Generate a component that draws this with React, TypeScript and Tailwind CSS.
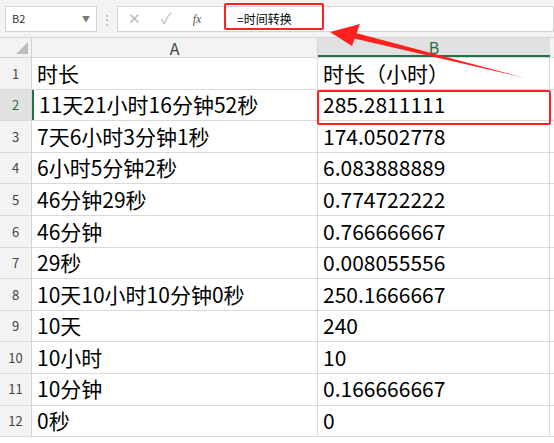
import React from "react";

const rows: [string, string][] = [
  ["时长", "时长（小时）"],
  ["11天21小时16分钟52秒", "285.2811111"],
  ["7天6小时3分钟1秒", "174.0502778"],
  ["6小时5分钟2秒", "6.083888889"],
  ["46分钟29秒", "0.774722222"],
  ["46分钟", "0.766666667"],
  ["29秒", "0.008055556"],
  ["10天10小时10分钟0秒", "250.1666667"],
  ["10天", "240"],
  ["10小时", "10"],
  ["10分钟", "0.166666667"],
  ["0秒", "0"],
];

export default function App() {
  const font = { fontFamily: '"Noto Sans CJK SC", "Noto Sans", sans-serif' };
  return (
    <div className="relative w-[554px] h-[443px] overflow-hidden bg-white" style={font}>
      <div className="h-[38px] bg-[#f3f3f3] flex items-center border-b border-[#d4d4d4]">
        <div className="ml-[5px] w-[92px] h-[26px] bg-white border border-[#d4d4d4] flex items-center px-[6px] text-[11px] text-[#333]">
          <span className="flex-1">B2</span>
          <span className="text-[8px] text-[#777]">▼</span>
        </div>
        <div className="w-[20px] text-center text-[#aaa] text-[12px]">⋮</div>
        <div className="flex-1 h-[26px] bg-white border border-[#d4d4d4] flex items-center">
          <span className="w-[32px] text-center text-[#bbb] text-[15px]">✕</span>
          <span className="w-[32px] text-center text-[#bbb] text-[15px]">✓</span>
          <span className="w-[30px] text-center text-[#555] text-[12px] italic" style={{ fontFamily: '"Liberation Serif", serif' }}>fx</span>
          <span className="ml-[25px] text-[12px] text-black">=时间转换</span>
        </div>
      </div>
      <div className="flex h-[20px] bg-[#f3f3f3] border-b border-[#d4d4d4] text-[16px] text-[#444]">
        <div className="w-[32px] border-r border-[#d4d4d4] relative">
          <div className="absolute right-[3px] bottom-[3px] w-0 h-0 border-l-[12px] border-l-transparent border-b-[12px] border-b-[#bdbdbd]" />
        </div>
        <div className="w-[286px] border-r border-[#d4d4d4] flex items-center justify-center leading-none">A</div>
        <div className="w-[232px] bg-[#e1e1e1] border-b-2 border-[#217346] flex items-center justify-center leading-none text-[#217346]">B</div>
        <div className="flex-1" />
      </div>
      {rows.map((r, i) => (
        <div key={i} className="flex h-[31.6px] border-b border-[#d9d9d9]">
          <div className={`w-[32px] border-r border-[#d4d4d4] flex items-center justify-center text-[13px] ${i === 1 ? "bg-[#e1e1e1] text-[#217346]" : "bg-[#f3f3f3] text-[#444]"}`}>{i + 1}</div>
          <div className={`w-[286px] border-r border-[#d9d9d9] flex items-center pl-[5px] text-[21px] text-black whitespace-nowrap ${i === 1 ? "border-l-2 border-l-[#217346]" : ""}`}>{r[0]}</div>
          <div className="w-[232px] border-r border-[#d9d9d9] flex items-center pl-[5px] text-[21px] text-black whitespace-nowrap">{r[1]}</div>
          <div className="flex-1" />
        </div>
      ))}
      <div className="absolute left-[224px] top-[3px] w-[100px] h-[27px] border-2 border-[#ff2020] rounded-[2px]" />
      <div className="absolute left-[317px] top-[90px] w-[234px] h-[35px] border-2 border-[#ff2020] rounded-[2px]" />
      <svg className="absolute left-0 top-0" width="554" height="443">
        <path d="M525 78 L352 38 L356 33 Z" fill="#ff2020" />
        <path d="M330 32 L360 24 L352 46 Z" fill="#ff2020" />
      </svg>
    </div>
  );
}
